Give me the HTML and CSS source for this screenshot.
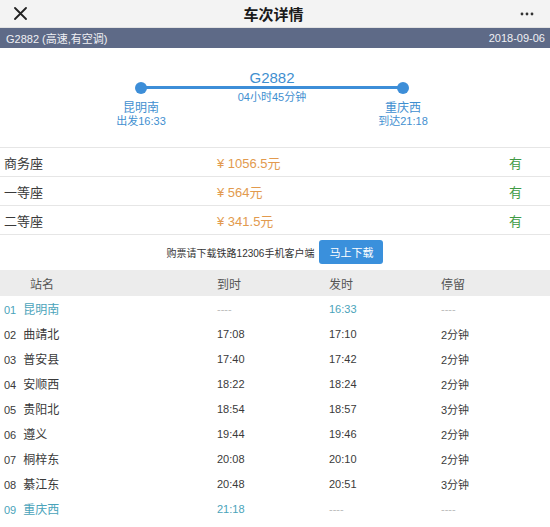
FILE: index.html
```html
<!DOCTYPE html>
<html lang="zh-CN">
<head>
    <meta charset="UTF-8">
    <meta name="viewport" content="width=device-width, initial-scale=1.0">
    <title>车次详情</title>
    <link rel="stylesheet" href="styles.css">
</head>
<body>

    <div class="topbar">
        <svg class="close" width="13" height="13" viewBox="0 0 13 13"><path d="M1 1L12 12M12 1L1 12" stroke="#222" stroke-width="1.8" stroke-linecap="round"/></svg>
        <div class="title">车次详情</div>
        <svg class="more" width="14" height="4" viewBox="0 0 14 4"><circle cx="2" cy="2" r="1.4" fill="#333"/><circle cx="7" cy="2" r="1.4" fill="#333"/><circle cx="12" cy="2" r="1.4" fill="#333"/></svg>
    </div>

    <div class="infobar">
        <span>G2882 (高速,有空调)</span>
        <span>2018-09-06</span>
    </div>

    <div class="route">
        <div class="station">
            <span class="dot"></span>
            <div class="st-name">昆明南</div>
            <div class="st-time">出发16:33</div>
        </div>
        <div class="middle">
            <div class="code">G2882</div>
            <div class="line"></div>
            <div class="duration">04小时45分钟</div>
        </div>
        <div class="station">
            <span class="dot"></span>
            <div class="st-name">重庆西</div>
            <div class="st-time">到达21:18</div>
        </div>
    </div>

    <div class="seats">
        <div class="seat"><span>商务座</span><span class="price">¥ 1056.5元</span><span class="left">有</span></div>
        <div class="seat"><span>一等座</span><span class="price">¥ 564元</span><span class="left">有</span></div>
        <div class="seat"><span>二等座</span><span class="price">¥ 341.5元</span><span class="left">有</span></div>
    </div>

    <div class="download">
        <span>购票请下载铁路12306手机客户端</span>
        <button class="dl-btn">马上下载</button>
    </div>

    <div class="stops">
        <div class="row head"><span class="name-h">站名</span><span>到时</span><span>发时</span><span>停留</span></div>
        <div class="row hl"><span><i>01</i>昆明南</span><span class="dash">----</span><span>16:33</span><span class="dash">----</span></div>
        <div class="row"><span><i>02</i>曲靖北</span><span>17:08</span><span>17:10</span><span>2分钟</span></div>
        <div class="row"><span><i>03</i>普安县</span><span>17:40</span><span>17:42</span><span>2分钟</span></div>
        <div class="row"><span><i>04</i>安顺西</span><span>18:22</span><span>18:24</span><span>2分钟</span></div>
        <div class="row"><span><i>05</i>贵阳北</span><span>18:54</span><span>18:57</span><span>3分钟</span></div>
        <div class="row"><span><i>06</i>遵义</span><span>19:44</span><span>19:46</span><span>2分钟</span></div>
        <div class="row"><span><i>07</i>桐梓东</span><span>20:08</span><span>20:10</span><span>2分钟</span></div>
        <div class="row"><span><i>08</i>綦江东</span><span>20:48</span><span>20:51</span><span>3分钟</span></div>
        <div class="row hl"><span><i>09</i>重庆西</span><span>21:18</span><span class="dash">----</span><span class="dash">----</span></div>
    </div>

</body>
</html>
```

FILE: styles.css
```css
body {
    margin: 0;
    width: 550px;
    height: 527px;
    overflow: hidden;
    background: #fff;
    font-family: "Liberation Sans", "Noto Sans CJK SC", sans-serif;
    color: #3a3a3a;
}
.topbar {
    height: 27px;
    background: #f3f3f3;
    border-bottom: 1px solid #e2e2e2;
    display: flex;
    align-items: center;
    justify-content: space-between;
    padding: 0 16px 0 14px;
}
.title {
    font-size: 15px;
    font-weight: bold;
    color: #1a1a1a;
}
.infobar {
    height: 20px;
    background: #5e6a87;
    color: #f0f0f4;
    font-size: 11px;
    display: flex;
    align-items: center;
    justify-content: space-between;
    padding: 0 5px 0 6px;
}
.route {
    height: 99px;
    border-bottom: 1px solid #e6e6e6;
    display: flex;
    padding-left: 101px;
    color: #3f8fd0;
}
.station {
    width: 80px;
    display: flex;
    flex-direction: column;
    align-items: center;
    padding-top: 34px;
}
.dot {
    width: 12px;
    height: 12px;
    border-radius: 50%;
    background: #3d8ed8;
}
.st-name {
    font-size: 12px;
    line-height: 14px;
    margin-top: 7px;
}
.st-time {
    font-size: 11px;
    line-height: 13px;
}
.middle {
    width: 182px;
    text-align: center;
    padding-top: 21px;
}
.code {
    font-size: 15px;
    line-height: 17px;
}
.line {
    height: 3px;
    background: #3d8ed8;
    margin: 0 -40px;
}
.duration {
    font-size: 11px;
    line-height: 13px;
    margin-top: 2px;
}
.seat {
    height: 28px;
    border-bottom: 1px solid #e6e6e6;
    display: grid;
    grid-template-columns: 213px 1fr auto;
    align-items: center;
    padding: 0 28px 0 4px;
    font-size: 13px;
}
.price {
    color: #e29a4e;
}
.left {
    color: #3e9a44;
}
.download {
    height: 34px;
    display: flex;
    align-items: center;
    justify-content: center;
    gap: 5px;
    font-size: 10px;
    color: #333;
}
.dl-btn {
    width: 64px;
    height: 24px;
    border: none;
    border-radius: 3px;
    background: #3a90dc;
    color: #fff;
    font-family: inherit;
    font-size: 11px;
    padding: 0;
}
.stops {
    margin-top: 1px;
}
.row {
    height: 25px;
    display: grid;
    grid-template-columns: 213px 112px 112px 1fr;
    align-items: center;
    padding-left: 4px;
    font-size: 11px;
}
.row span:first-child {
    font-size: 12px;
}
.row i {
    font-style: normal;
    font-size: 11px;
    margin-right: 7px;
}
.row.head {
    height: 26px;
    background: #ececec;
    color: #555;
}
.row.head span {
    font-size: 12px;
}
.name-h {
    padding-left: 26px;
}
.row.hl {
    color: #4aa3ba;
}
.row .dash {
    color: #bbb;
}
```
